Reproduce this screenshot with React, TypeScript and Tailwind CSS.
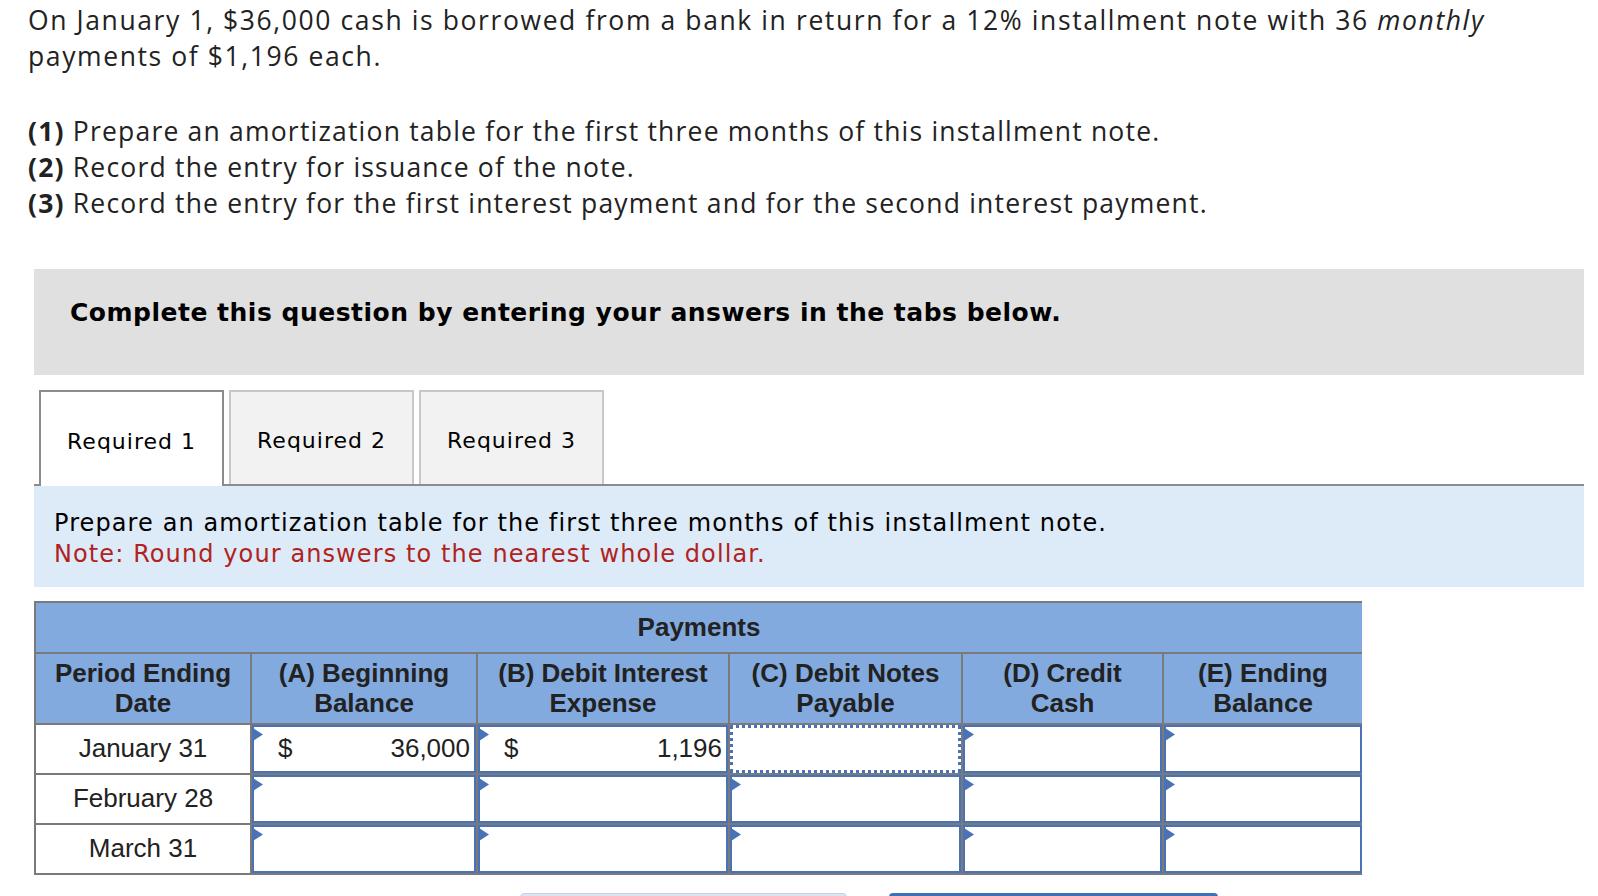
import React from 'react';

function Flag() {
  return (
    <svg className="absolute -left-[1px] top-[1px]" width="10" height="13" viewBox="0 0 10 13">
      <polygon points="0,0 10,6.5 0,13" fill="#4a72b6" />
    </svg>
  );
}

function InputCell({ value, dollar, active }: { value?: string; dollar?: boolean; active?: boolean }) {
  return (
    <div className="bg-white flex">
      <div
        className={`relative flex-1 flex items-center justify-between pl-[24px] pr-[4px] ${
          active ? 'border-[3px] border-dotted border-[#4a72b6]' : 'border-2 border-[#4a72b6]'
        }`}>
        {!active && <Flag />}
        <span>{dollar ? '$' : ''}</span>
        <span>{value ?? ''}</span>
      </div>
    </div>
  );
}

export default function App() {
  const rows = [
    { date: 'January 31', a: '36,000', b: '1,196', first: true },
    { date: 'February 28' },
    { date: 'March 31' },
  ];
  return (
    <div className="w-[1598px] h-[896px] overflow-hidden bg-white text-[#222]">
      <div className="pl-[28px] pt-[3px] font-['Open_Sans',sans-serif] text-[26.5px] leading-[35.7px] tracking-[1.2px] w-[1556px]">
        <p className="tracking-[1.6px]">
          On January 1, $36,000 cash is borrowed from a bank in return for a 12% installment note with 36{' '}
          <em>monthly</em> payments of $1,196 each.
        </p>
        <p className="mt-[40px]">
          <b>(1)</b> Prepare an amortization table for the first three months of this installment note.
          <br />
          <b>(2)</b> Record the entry for issuance of the note.
          <br />
          <b>(3)</b> Record the entry for the first interest payment and for the second interest payment.
        </p>
      </div>

      <div className="ml-[34px] w-[1550px] mt-[47px]">
        <div className="h-[106px] bg-[#e0e0e0] pt-[29px] pl-[36px] font-['DejaVu_Sans',sans-serif] font-bold text-[25px] tracking-[0.5px] leading-[30px] text-black">
          Complete this question by entering your answers in the tabs below.
        </div>

        <div className="mt-[15px] flex gap-[5px] pl-[5px] border-b-2 border-[#8c8c8c] font-['DejaVu_Sans',sans-serif] text-[22px] tracking-[1px] text-black">
          <div className="w-[185px] h-[96px] -mb-[2px] pt-[6px] bg-white border-2 border-b-0 border-[#8c8c8c] flex items-center justify-center">
            Required 1
          </div>
          <div className="w-[185px] h-[94px] pt-[6px] bg-[#f2f2f2] border-2 border-b-0 border-[#c8c8c8] flex items-center justify-center">
            Required 2
          </div>
          <div className="w-[185px] h-[94px] pt-[6px] bg-[#f2f2f2] border-2 border-b-0 border-[#c8c8c8] flex items-center justify-center">
            Required 3
          </div>
        </div>

        <div className="h-[101px] bg-[#ddeaf8] pt-[22px] pl-[20px] font-['DejaVu_Sans',sans-serif] text-[24px] tracking-[1.1px] leading-[31px] text-black">
          <div>Prepare an amortization table for the first three months of this installment note.</div>
          <div className="text-[#b0231d]">Note: Round your answers to the nearest whole dollar.</div>
        </div>

        <div className="mt-[14px] w-[1328px] bg-[#7a7a7a] p-[2px] font-['Liberation_Sans',Arial,sans-serif] text-[26px] text-[#222]">
          <div className="grid grid-cols-[214px_224px_250px_231px_199px_198px] gap-[2px]">
            <div className="col-span-6 h-[49px] bg-[#82aadf] font-bold flex items-center justify-center">Payments</div>
            {[
              ['Period Ending', 'Date'],
              ['(A) Beginning', 'Balance'],
              ['(B) Debit Interest', 'Expense'],
              ['(C) Debit Notes', 'Payable'],
              ['(D) Credit', 'Cash'],
              ['(E) Ending', 'Balance'],
            ].map(([l1, l2]) => (
              <div key={l1} className="h-[69px] bg-[#82aadf] font-bold leading-[30px] flex flex-col items-center justify-center text-center">
                <span>{l1}</span>
                <span>{l2}</span>
              </div>
            ))}
            {rows.map((r) => (
              <React.Fragment key={r.date}>
                <div className="h-[48px] bg-white flex items-center justify-center">{r.date}</div>
                <InputCell dollar={r.first} value={r.a} />
                <InputCell dollar={r.first} value={r.b} />
                <InputCell active={r.first} />
                <InputCell />
                <InputCell />
              </React.Fragment>
            ))}
          </div>
        </div>

        <div className="mt-[18px] flex">
          <div className="ml-[486px] w-[327px] h-[10px] rounded-t-[4px] bg-[#dbe4f0] border border-[#c5d3e6]" />
          <div className="ml-[42px] w-[329px] h-[10px] rounded-t-[4px] bg-[#3f6fb5]" />
        </div>
      </div>
    </div>
  );
}
